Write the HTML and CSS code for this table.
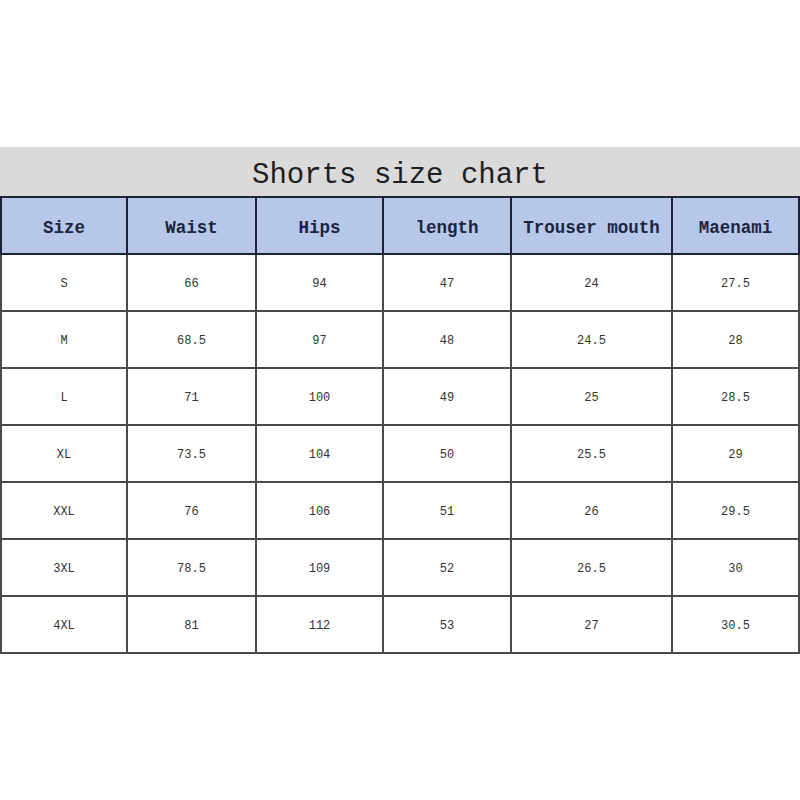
FILE: index.html
```html
<!DOCTYPE html>
<html>
<head>
<meta charset="utf-8">
<link rel="stylesheet" href="styles.css">
</head>
<body>
<div class="chart">
  <div class="title">Shorts size chart</div>
  <table class="sizes">
    <colgroup>
      <col class="c1"><col class="c2"><col class="c3"><col class="c4"><col class="c5"><col class="c6">
    </colgroup>
    <thead>
      <tr><th>Size</th><th>Waist</th><th>Hips</th><th>length</th><th>Trouser mouth</th><th>Maenami</th></tr>
    </thead>
    <tbody>
      <tr><td>S</td><td>66</td><td>94</td><td>47</td><td>24</td><td>27.5</td></tr>
      <tr><td>M</td><td>68.5</td><td>97</td><td>48</td><td>24.5</td><td>28</td></tr>
      <tr><td>L</td><td>71</td><td>100</td><td>49</td><td>25</td><td>28.5</td></tr>
      <tr><td>XL</td><td>73.5</td><td>104</td><td>50</td><td>25.5</td><td>29</td></tr>
      <tr><td>XXL</td><td>76</td><td>106</td><td>51</td><td>26</td><td>29.5</td></tr>
      <tr><td>3XL</td><td>78.5</td><td>109</td><td>52</td><td>26.5</td><td>30</td></tr>
      <tr><td>4XL</td><td>81</td><td>112</td><td>53</td><td>27</td><td>30.5</td></tr>
    </tbody>
  </table>
</div>
</body>
</html>
```
FILE: styles.css
```css
html, body {
  margin: 0;
  padding: 0;
  background: #ffffff;
}
.chart {
  margin-top: 147px;
  width: 800px;
}
.title {
  height: 49px;
  background: #dadada;
  font-family: "Liberation Mono", monospace;
  font-size: 29px;
  line-height: 58px;
  color: #1e1e1e;
  text-align: center;
  overflow: hidden;
}
.sizes {
  border-collapse: collapse;
  table-layout: fixed;
  width: 798px;
  margin-left: 0;
  font-family: "Liberation Mono", monospace;
}
.c1 { width: 126px; }
.c2 { width: 129px; }
.c3 { width: 127px; }
.c4 { width: 128px; }
.c5 { width: 161px; }
.c6 { width: 127px; }
.sizes th {
  height: 51px;
  padding: 4px 0 0;
  background: #b6c7e9;
  color: #1c2440;
  font-size: 17.5px;
  font-weight: bold;
  border: 2px solid #1e2236;
  text-align: center;
}
.sizes td {
  height: 52px;
  padding: 3px 0 0;
  color: #333333;
  font-size: 12px;
  border: 2px solid #4a4a4a;
  text-align: center;
}
```
